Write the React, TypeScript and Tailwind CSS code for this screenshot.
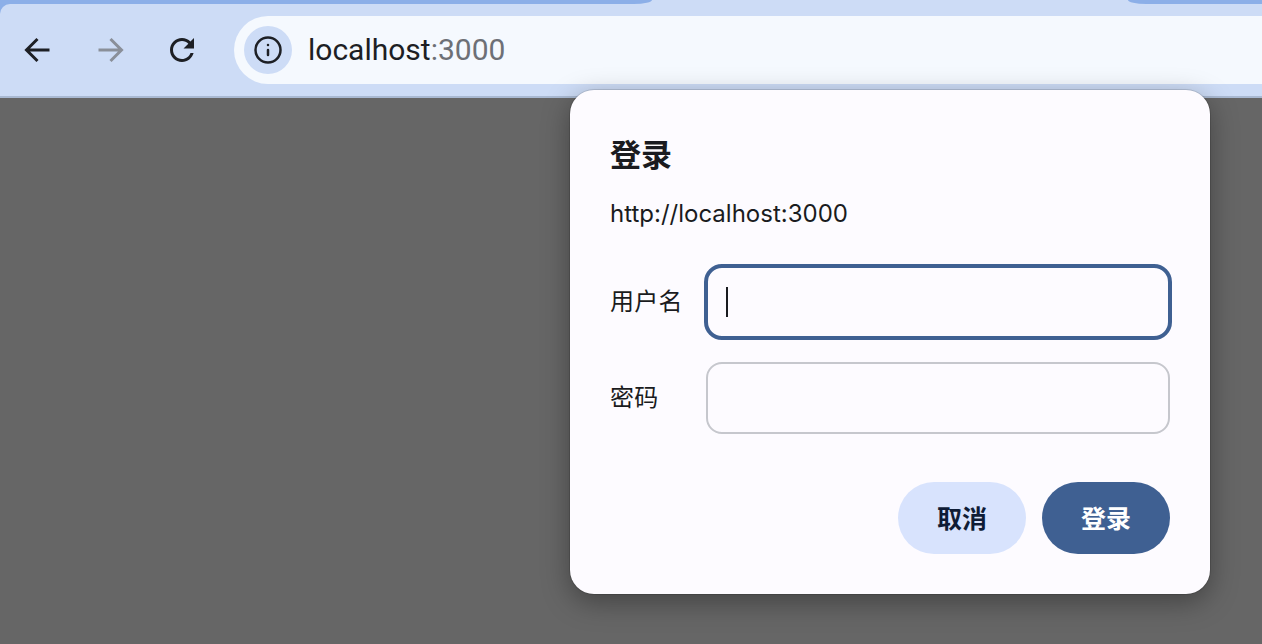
import { Info } from "lucide-react";

const uiFont = "font-['Inter','Noto_Sans_CJK_SC',sans-serif]";

function Arrow({ flip, className }: { flip?: boolean; className: string }) {
  return (
    <svg width="28" height="28" viewBox="0 0 28 28" fill="none" className={className}>
      <path
        d={flip ? "M2.5 14H25M14.5 3l11 11-11 11" : "M25.5 14H3M13.5 3l-11 11 11 11"}
        stroke="currentColor"
        strokeWidth="3"
      />
    </svg>
  );
}

function Field({ label, focused }: { label: string; focused?: boolean }) {
  return (
    <div className="flex items-center">
      <span className="w-[96px] text-[24px] tracking-[0.2px] text-[#1a1b20]">{label}</span>
      <div
        className={
          focused
            ? "-mx-[2px] -my-[2px] flex h-[76px] w-[468px] items-center rounded-[18px] border-4 border-[#3f6092] pl-[18px]"
            : "h-[72px] w-[464px] rounded-[16px] border-2 border-[#c6c7cd]"
        }
      >
        {focused && <span className="h-[30px] w-[2px] bg-[#1a1b20]" />}
      </div>
    </div>
  );
}

export default function App() {
  return (
    <div className="relative h-[644px] w-[1262px] overflow-hidden bg-[#666666]">
      {/* Browser chrome */}
      <header className="bg-[#8cafe8]">
        <div className="flex h-[4px] justify-between bg-[#cddcf6]">
          <div className="w-[652px] rounded-br-[18px_4px] bg-[#8cafe8]" />
          <div className="w-[134px] rounded-bl-[18px_4px] bg-[#8cafe8]" />
        </div>
        <div className="flex h-[92px] items-center rounded-tl-[10px] bg-[#cddcf6] pl-[24px]">
          <Arrow className="text-[#1d1f24]" />
          <Arrow flip className="ml-[44px] text-[#8a8f99]" />
          <svg width="36" height="36" viewBox="0 0 24 24" className="ml-[40px] text-[#1d1f24]">
            <path
              fill="currentColor"
              d="M17.65 6.35C16.2 4.9 14.21 4 12 4c-4.42 0-7.99 3.58-7.99 8s3.57 8 7.99 8c3.73 0 6.84-2.55 7.73-6h-2.08c-.82 2.33-3.04 4-5.65 4-3.31 0-6-2.69-6-6s2.69-6 6-6c1.66 0 3.14.69 4.22 1.78L13 11h7V4l-2.35 2.35z"
            />
          </svg>
          <div className="ml-[34px] flex h-[68px] flex-1 items-center rounded-l-full bg-[#f5f9fe] pl-[10px]">
            <div className="flex h-[48px] w-[48px] items-center justify-center rounded-full bg-[#cddcf6]">
              <Info size={30} strokeWidth={2} className="text-[#1d1f24]" />
            </div>
            <span className="ml-[16px] -mt-px font-['Roboto',sans-serif] text-[30px] text-[#1d1f24]">
              localhost<span className="text-[#6d7076]">:3000</span>
            </span>
          </div>
        </div>
        <div className="h-[2px] bg-[#a9b9d2]" />
      </header>

      {/* Login dialog */}
      <div
        className={`absolute left-[570px] top-[90px] flex h-[504px] w-[640px] flex-col rounded-[24px] bg-[#fdfbff] p-[40px] shadow-[0_0_0_1px_rgba(0,0,0,0.12),0_8px_28px_rgba(0,0,0,0.35)] ${uiFont}`}
      >
        <h1 className="text-[31px] leading-[50px] font-semibold text-[#1a1b20]">登录</h1>
        <p className="mt-[18px] text-[24px] leading-[32px] text-[#1a1b20]">http://localhost:3000</p>
        <div className="mt-[36px] flex flex-col gap-[24px]">
          <Field label="用户名" focused />
          <Field label="密码" />
        </div>
        <div className="mt-[48px] flex justify-end gap-[16px]">
          <button className="h-[72px] w-[128px] rounded-full bg-[#d8e3fd] pt-[3px] text-[25px] font-semibold text-[#0f1c36]">
            取消
          </button>
          <button className="h-[72px] w-[128px] rounded-full bg-[#3f6092] pt-[3px] text-[25px] font-semibold text-white">
            登录
          </button>
        </div>
      </div>
    </div>
  );
}
